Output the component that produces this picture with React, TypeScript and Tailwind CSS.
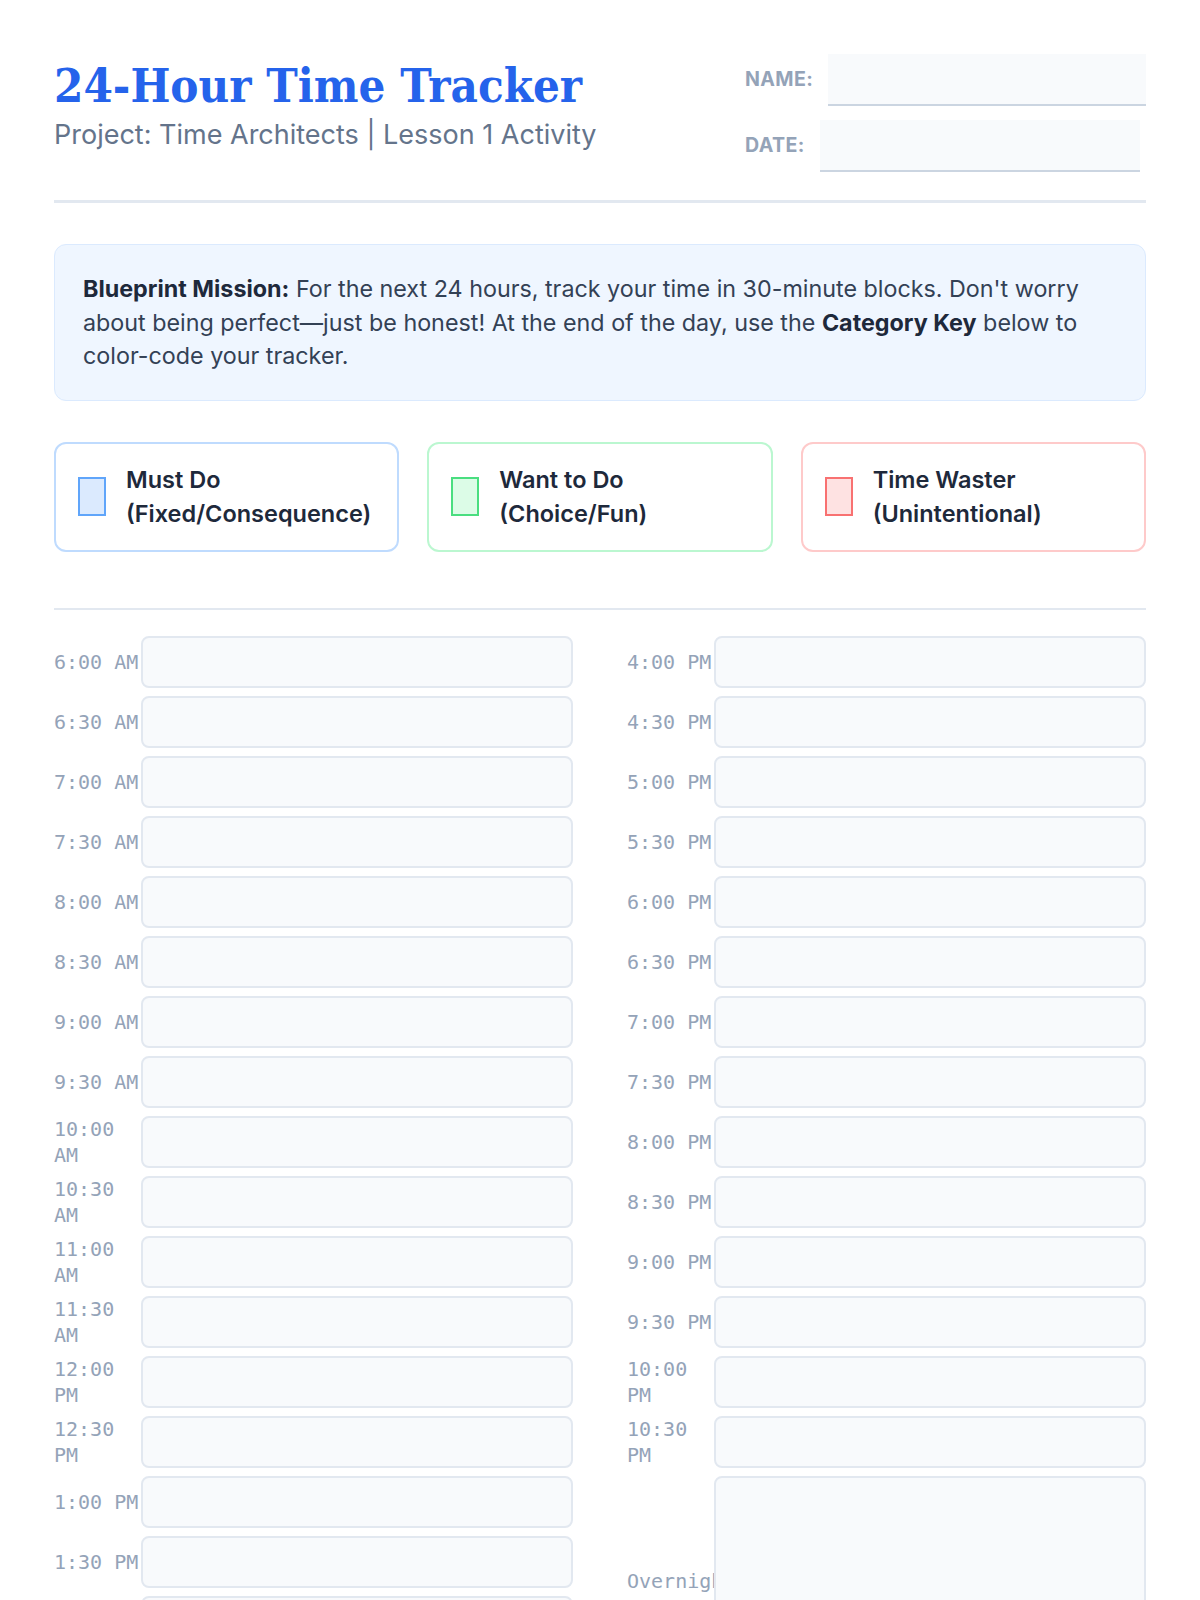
import React from "react";

const leftTimes = [
  "6:00 AM", "6:30 AM", "7:00 AM", "7:30 AM", "8:00 AM", "8:30 AM", "9:00 AM", "9:30 AM",
  "10:00 AM", "10:30 AM", "11:00 AM", "11:30 AM", "12:00 PM", "12:30 PM", "1:00 PM", "1:30 PM",
  "2:00 PM", "2:30 PM", "3:00 PM", "3:30 PM",
];
const rightTimes = [
  "4:00 PM", "4:30 PM", "5:00 PM", "5:30 PM", "6:00 PM", "6:30 PM", "7:00 PM", "7:30 PM",
  "8:00 PM", "8:30 PM", "9:00 PM", "9:30 PM", "10:00 PM", "10:30 PM",
];

function Row({ label, tall }: { label: string; tall?: boolean }) {
  return (
    <div className="flex items-center">
      <div className="w-[87px] shrink-0 text-[20px] leading-[26px] text-[#94a3b8] [font-family:'DejaVu_Sans_Mono',monospace]">
        {label}
      </div>
      <div
        className={
          tall
            ? "flex-1 h-[210px] rounded-lg border-2 border-[#e2e8f0] bg-[#f8fafc]"
            : "flex-1 h-[52px] rounded-lg border-2 border-[#e2e8f0] bg-[#f8fafc]"
        }
      />
    </div>
  );
}

function Card({
  title,
  sub,
  border,
  swatch,
}: {
  title: string;
  sub: string;
  border: string;
  swatch: string;
}) {
  return (
    <div className={"flex items-center gap-[20px] rounded-xl border-2 bg-white px-[22px] py-[19px] " + border}>
      <div className={"w-[28px] h-[39px] shrink-0 border-2 " + swatch} />
      <div className="text-[23.5px] leading-[34px] font-semibold text-[#1e293b]">
        <div>{title}</div>
        <div>{sub}</div>
      </div>
    </div>
  );
}

export default function App() {
  return (
    <div className="min-h-screen bg-white px-[54px] pt-[54px] pb-[60px] [font-family:Inter,'Noto_Sans',sans-serif]">
      <header className="flex items-start justify-between border-b-[3px] border-[#e2e8f0] pb-[28px]">
        <div>
          <h1 className="mt-[2px] text-[47px] leading-[60px] font-bold font-stretch-condensed text-[#2563eb] [font-family:'DejaVu_Serif_Condensed','DejaVu_Serif',serif]">
            24-Hour Time Tracker
          </h1>
          <p className="mt-[3px] text-[27px] leading-[32px] text-[#64748b]">
            Project: Time Architects | Lesson 1 Activity
          </p>
        </div>
        <div className="flex w-[401px] flex-col gap-[14px]">
          <div className="flex items-center gap-[15px]">
            <span className="text-[19.6px] font-bold uppercase tracking-[0.02em] text-[#94a3b8]">Name:</span>
            <div className="h-[52px] w-[320px] border-b-2 border-[#cbd5e1] bg-[#f8fafc]" />
          </div>
          <div className="flex items-center gap-[15px]">
            <span className="text-[19.6px] font-bold uppercase tracking-[0.02em] text-[#94a3b8]">Date:</span>
            <div className="h-[52px] w-[320px] border-b-2 border-[#cbd5e1] bg-[#f8fafc]" />
          </div>
        </div>
      </header>

      <section className="mt-[41px] rounded-xl border border-[#dbeafe] bg-[#eff6ff] px-[28px] py-[27px] text-[23.3px] leading-[33.6px] text-[#334155]">
        <strong className="font-bold text-[#1e293b]">Blueprint Mission:</strong> For the next 24 hours, track your
        time in 30-minute blocks. Don't worry about being perfect—just be honest! At the end of the day, use the{" "}
        <strong className="font-bold text-[#1e293b]">Category Key</strong> below to color-code your tracker.
      </section>

      <section className="mt-[41px] grid grid-cols-3 gap-[28px]">
        <Card title="Must Do" sub="(Fixed/Consequence)" border="border-[#bfdbfe]" swatch="border-[#60a5fa] bg-[#dbeafe]" />
        <Card title="Want to Do" sub="(Choice/Fun)" border="border-[#bbf7d0]" swatch="border-[#4ade80] bg-[#dcfce7]" />
        <Card title="Time Waster" sub="(Unintentional)" border="border-[#fecaca]" swatch="border-[#f87171] bg-[#fee2e2]" />
      </section>

      <section className="mt-[56px] border-t-2 border-[#e2e8f0] pt-[26px]">
        <div className="grid grid-cols-2 gap-x-[54px]">
          <div className="flex flex-col gap-[8px]">
            {leftTimes.map((t) => (
              <Row key={t} label={t} />
            ))}
          </div>
          <div className="flex flex-col gap-[8px]">
            {rightTimes.map((t) => (
              <Row key={t} label={t} />
            ))}
            <Row label="Overnight" tall />
          </div>
        </div>
      </section>
    </div>
  );
}
